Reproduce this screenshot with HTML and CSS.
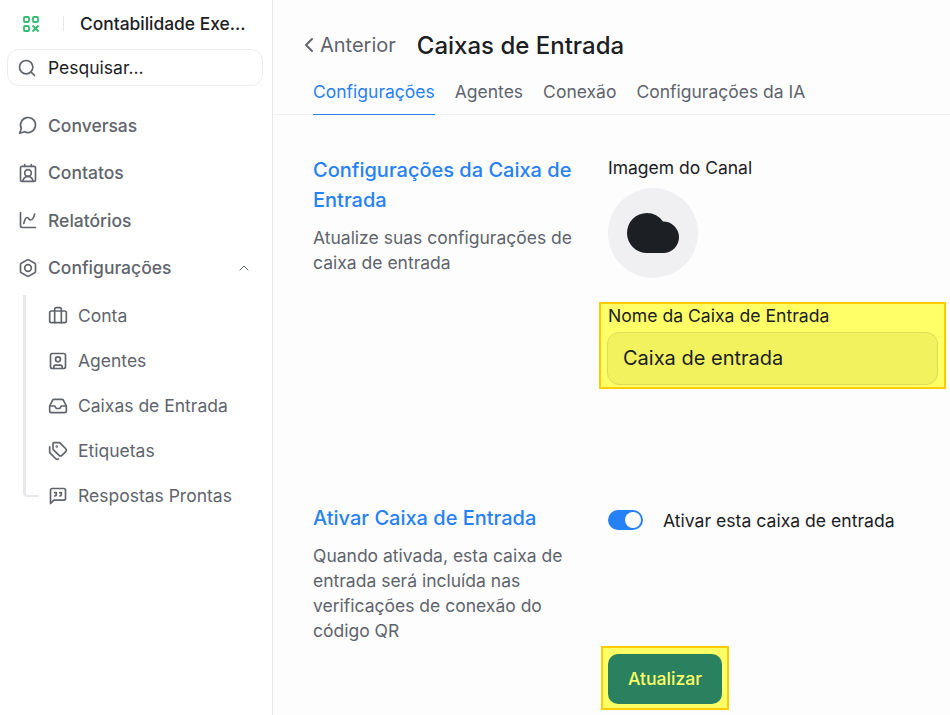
FILE: index.html
```html
<!DOCTYPE html>
<html lang="pt-BR">
<head>
<meta charset="UTF-8">
<meta name="viewport" content="width=device-width, initial-scale=1.0">
<title>Caixas de Entrada</title>
<link rel="stylesheet" href="styles.css">
</head>
<body>

<aside class="sidebar">
    <div class="brand">
        <svg class="brand-logo" viewBox="0 0 16 16" fill="none" stroke="#34bd70" stroke-width="1.8">
            <rect x="1" y="1" width="5" height="5" rx="1"/>
            <rect x="10" y="1" width="5" height="5" rx="1"/>
            <rect x="1" y="10" width="5" height="5" rx="1"/>
            <path d="M9.500 9.500l6 6M15.500 9.500l-6 6" stroke-width="2"/>
        </svg>
        <span class="brand-sep"></span>
        <span class="brand-name">Contabilidade Exe...</span>
    </div>

    <div class="search">
        <svg class="icon" viewBox="0 0 24 24"><circle cx="11" cy="11" r="8"/><path d="m21 21-4.3-4.3"/></svg>
        <span>Pesquisar...</span>
    </div>

    <nav class="menu">
        <a class="menu-item">
            <svg class="icon" viewBox="0 0 24 24"><path d="M7.900 20A9 9 0 1 0 4 16.100L2 22Z"/></svg>
            Conversas
        </a>
        <a class="menu-item">
            <svg class="icon" viewBox="0 0 24 24"><path d="M16 2v2"/><path d="M17.915 22a6 6 0 0 0-12 0"/><path d="M8 2v2"/><circle cx="12" cy="12" r="4"/><rect x="3" y="4" width="18" height="18" rx="2"/></svg>
            Contatos
        </a>
        <a class="menu-item">
            <svg class="icon" viewBox="0 0 24 24"><path d="M3 3v16a2 2 0 0 0 2 2h16"/><path d="M7 16c.5-2 1.500-7 4-7 2 0 2 3 4 3 2.500 0 4.500-5 5-7"/></svg>
            Relatórios
        </a>
        <a class="menu-item">
            <svg class="icon" viewBox="0 0 24 24"><path d="M21 16V8a2 2 0 0 0-1-1.730l-7-4a2 2 0 0 0-2 0l-7 4A2 2 0 0 0 3 8v8a2 2 0 0 0 1 1.730l7 4a2 2 0 0 0 2 0l7-4A2 2 0 0 0 21 16z"/><circle cx="12" cy="12" r="4"/></svg>
            Configurações
            <svg class="chevron" viewBox="0 0 24 24"><path d="m18 15-6-6-6 6"/></svg>
        </a>
    </nav>

    <ul class="submenu">
        <li>
            <svg class="icon" viewBox="0 0 24 24"><path d="M16 20V4a2 2 0 0 0-2-2h-4a2 2 0 0 0-2 2v16"/><rect x="2" y="6" width="20" height="14" rx="2"/></svg>
            Conta
        </li>
        <li>
            <svg class="icon" viewBox="0 0 24 24"><rect x="3" y="3" width="18" height="18" rx="2"/><circle cx="12" cy="10" r="3"/><path d="M7 21v-2a2 2 0 0 1 2-2h6a2 2 0 0 1 2 2v2"/></svg>
            Agentes
        </li>
        <li>
            <svg class="icon" viewBox="0 0 24 24"><path d="M22 12h-6l-2 3h-4l-2-3H2"/><path d="M5.450 5.110 2 12v6a2 2 0 0 0 2 2h16a2 2 0 0 0 2-2v-6l-3.450-6.890A2 2 0 0 0 16.760 4H7.240a2 2 0 0 0-1.790 1.110z"/></svg>
            Caixas de Entrada
        </li>
        <li>
            <svg class="icon" viewBox="0 0 24 24"><path d="M13.172 2a2 2 0 0 1 1.414.586l6.710 6.710a2.400 2.400 0 0 1 0 3.408l-4.592 4.592a2.400 2.400 0 0 1-3.408 0l-6.710-6.710A2 2 0 0 1 6 9.172V3a1 1 0 0 1 1-1z"/><path d="M2 7v6.172a2 2 0 0 0 .586 1.414l6.710 6.710a2.400 2.400 0 0 0 3.191.193"/><circle cx="10.500" cy="6.500" r=".5"/></svg>
            Etiquetas
        </li>
        <li>
            <svg class="icon" viewBox="0 0 24 24"><path d="M21 15a2 2 0 0 1-2 2H7l-4 4V5a2 2 0 0 1 2-2h14a2 2 0 0 1 2 2z"/><path d="M8 12a2 2 0 0 0 2-2V8H8"/><path d="M14 12a2 2 0 0 0 2-2V8h-2"/></svg>
            Respostas Prontas
        </li>
    </ul>
</aside>

<main class="content">
    <header class="page-head">
        <a class="back">
            <svg viewBox="0 0 24 24"><path d="m15 18-6-6 6-6"/></svg>
            Anterior
        </a>
        <h1>Caixas de Entrada</h1>
    </header>

    <div class="tabs">
        <a class="tab active">Configurações</a>
        <a class="tab">Agentes</a>
        <a class="tab">Conexão</a>
        <a class="tab">Configurações da IA</a>
    </div>

    <section class="row row-settings">
        <div class="row-info">
            <h2>Configurações da Caixa de Entrada</h2>
            <p>Atualize suas configurações de caixa de entrada</p>
        </div>
        <div class="row-fields">
            <div class="field-label">Imagem do Canal</div>
            <div class="avatar">
                <svg viewBox="0 0 52 40"><path d="M20 0a20 20 0 0 1 16 8.500A15.500 15.500 0 0 1 36.500 40H20A20 20 0 0 1 20 0z"/></svg>
            </div>
            <div class="marked marked-field">
                <label class="field-name">Nome da Caixa de Entrada</label>
                <div class="input">Caixa de entrada</div>
            </div>
        </div>
    </section>

    <section class="row">
        <div class="row-info">
            <h2>Ativar Caixa de Entrada</h2>
            <p>Quando ativada, esta caixa de entrada será incluída nas verificações de conexão do código QR</p>
        </div>
        <div class="row-fields">
            <div class="toggle-row">
                <span class="toggle"><span class="knob"></span></span>
                <span>Ativar esta caixa de entrada</span>
            </div>
            <div class="marked marked-button">
                <button class="btn">Atualizar</button>
            </div>
        </div>
    </section>
</main>

</body>
</html>
```

FILE: styles.css
```css
* {
    box-sizing: border-box;
}

html, body {
    height: 100%;
}

body {
    margin: 0;
    display: flex;
    height: 100vh;
    overflow: hidden;
    font-family: Inter, "Liberation Sans", sans-serif;
    font-size: 17.5px;
    color: #1c2024;
    background-color: #fdfdfe;
}

svg {
    flex: none;
}

.icon, .chevron, .back svg {
    fill: none;
    stroke: currentColor;
    stroke-width: 2;
    stroke-linecap: round;
    stroke-linejoin: round;
}

/* sidebar */
.sidebar {
    flex: none;
    width: 273px;
    padding: 0 9px 0 7px;
    background-color: #fff;
    border-right: 1px solid #e8e8ec;
}

.brand {
    display: flex;
    align-items: center;
    height: 47px;
    padding-left: 16px;
}

.brand-logo {
    width: 16px;
    height: 16px;
}

.brand-sep {
    width: 1px;
    height: 15px;
    margin: 0 16px 0 24px;
    background-color: #e8e8ec;
}

.brand-name {
    font-size: 17.4px;
    font-weight: 500;
    white-space: nowrap;
}

.search {
    display: flex;
    align-items: center;
    gap: 11px;
    height: 37px;
    margin-top: 2px;
    padding-left: 9px;
    border: 1px solid #ececf0;
    border-radius: 12px;
}

.search .icon {
    width: 20px;
    height: 20px;
    color: #60646c;
}

.menu {
    margin-top: 15.5px;
}

.menu-item {
    display: flex;
    align-items: center;
    gap: 10px;
    height: 47.5px;
    padding-left: 11px;
    font-weight: 500;
    color: #60646c;
}

.menu-item .icon {
    width: 20px;
    height: 20px;
}

.chevron {
    width: 16px;
    height: 16px;
    margin-left: auto;
    margin-right: 11px;
    stroke-width: 1.5;
}

.submenu {
    position: relative;
    list-style: none;
    margin: 1.5px 0 0 16px;
    padding: 0 0 0 25px;
    width: 240px;
}

/* guide line on the left of the sub items */
.submenu::before {
    content: "";
    position: absolute;
    left: 0;
    top: 2px;
    bottom: 21px;
    width: 13px;
    border-left: 3px solid #e8e8ec;
    border-bottom: 2px solid #e8e8ec;
    border-bottom-left-radius: 4px;
}

.submenu li {
    display: flex;
    align-items: center;
    gap: 10px;
    height: 45px;
    color: #60646c;
}

.submenu .icon {
    width: 20px;
    height: 20px;
}

/* main area */
.content {
    flex: 1;
    min-width: 0;
}

.page-head {
    display: flex;
    align-items: center;
    height: 64px;
    margin-top: 13px;
    padding-left: 24px;
}

.back {
    display: flex;
    align-items: center;
    font-size: 20px;
    color: #60646c;
}

.back svg {
    width: 24px;
    height: 24px;
    margin-right: -1px;
}

h1 {
    margin: 0 0 0 21px;
    font-size: 24px;
    font-weight: 500;
}

.tabs {
    display: flex;
    gap: 20px;
    height: 38px;
    padding-left: 40px;
    border-bottom: 1px solid #f0f0f3;
}

.tab {
    height: 38px;
    padding-top: 3px;
    line-height: 24px;
    color: #60646c;
}

.tab.active {
    color: #2781f6;
    border-bottom: 1px solid #2781f6;
}

.row {
    display: flex;
    padding-left: 40px;
}

.row-settings {
    height: 388px;
    padding-top: 40px;
}

.row-info {
    flex: none;
    width: 295px;
    padding-right: 20px;
}

.row-info h2 {
    margin: 0;
    font-size: 20px;
    line-height: 30px;
    font-weight: 500;
    color: #2781f6;
}

.row-info p {
    margin: 10px 0 0;
    line-height: 25px;
    color: #60646c;
}

.row-fields {
    flex: 1;
    min-width: 0;
}

.field-label {
    margin-top: 1px;
    line-height: 24px;
}

.avatar {
    display: flex;
    align-items: center;
    justify-content: center;
    width: 90px;
    height: 90px;
    margin-top: 8px;
    border-radius: 50%;
    background-color: #f0f0f3;
}

.avatar svg {
    width: 52px;
    height: 40px;
    fill: #1c2024;
}

/* yellow highlight around fields */
.marked {
    background-color: #ffff66;
    border: 2px solid #ffcc00;
}

.marked-field {
    width: 347px;
    height: 87px;
    margin: 24px 0 0 -9px;
    padding: 0 6px;
}

.field-name {
    display: block;
    margin-left: 1px;
    font-size: 17.6px;
    line-height: 24px;
}

.input {
    display: flex;
    align-items: center;
    height: 53px;
    margin-top: 4px;
    padding: 0 0 2px 15px;
    font-size: 20px;
    background-color: #f2f25e;
    border: 1px solid #dbdb5c;
    border-radius: 12px;
}

.toggle-row {
    display: flex;
    align-items: center;
    gap: 20px;
    height: 20px;
    margin-top: 7px;
    font-size: 17.6px;
}

.toggle {
    display: flex;
    align-items: center;
    justify-content: flex-end;
    width: 35px;
    height: 20px;
    padding-right: 2px;
    border-radius: 10px;
    background-color: #2781f6;
}

.knob {
    width: 16px;
    height: 16px;
    border-radius: 50%;
    background-color: #fff;
}

.marked-button {
    width: 128px;
    height: 64px;
    margin: 116px 0 0 -7px;
    padding: 6px 5px;
}

.btn {
    display: block;
    width: 114px;
    height: 50px;
    padding: 0 0 2px;
    font-family: inherit;
    font-size: 17.6px;
    font-weight: 500;
    color: #ffff66;
    background-color: #298160;
    border: none;
    border-radius: 10px;
}
```
